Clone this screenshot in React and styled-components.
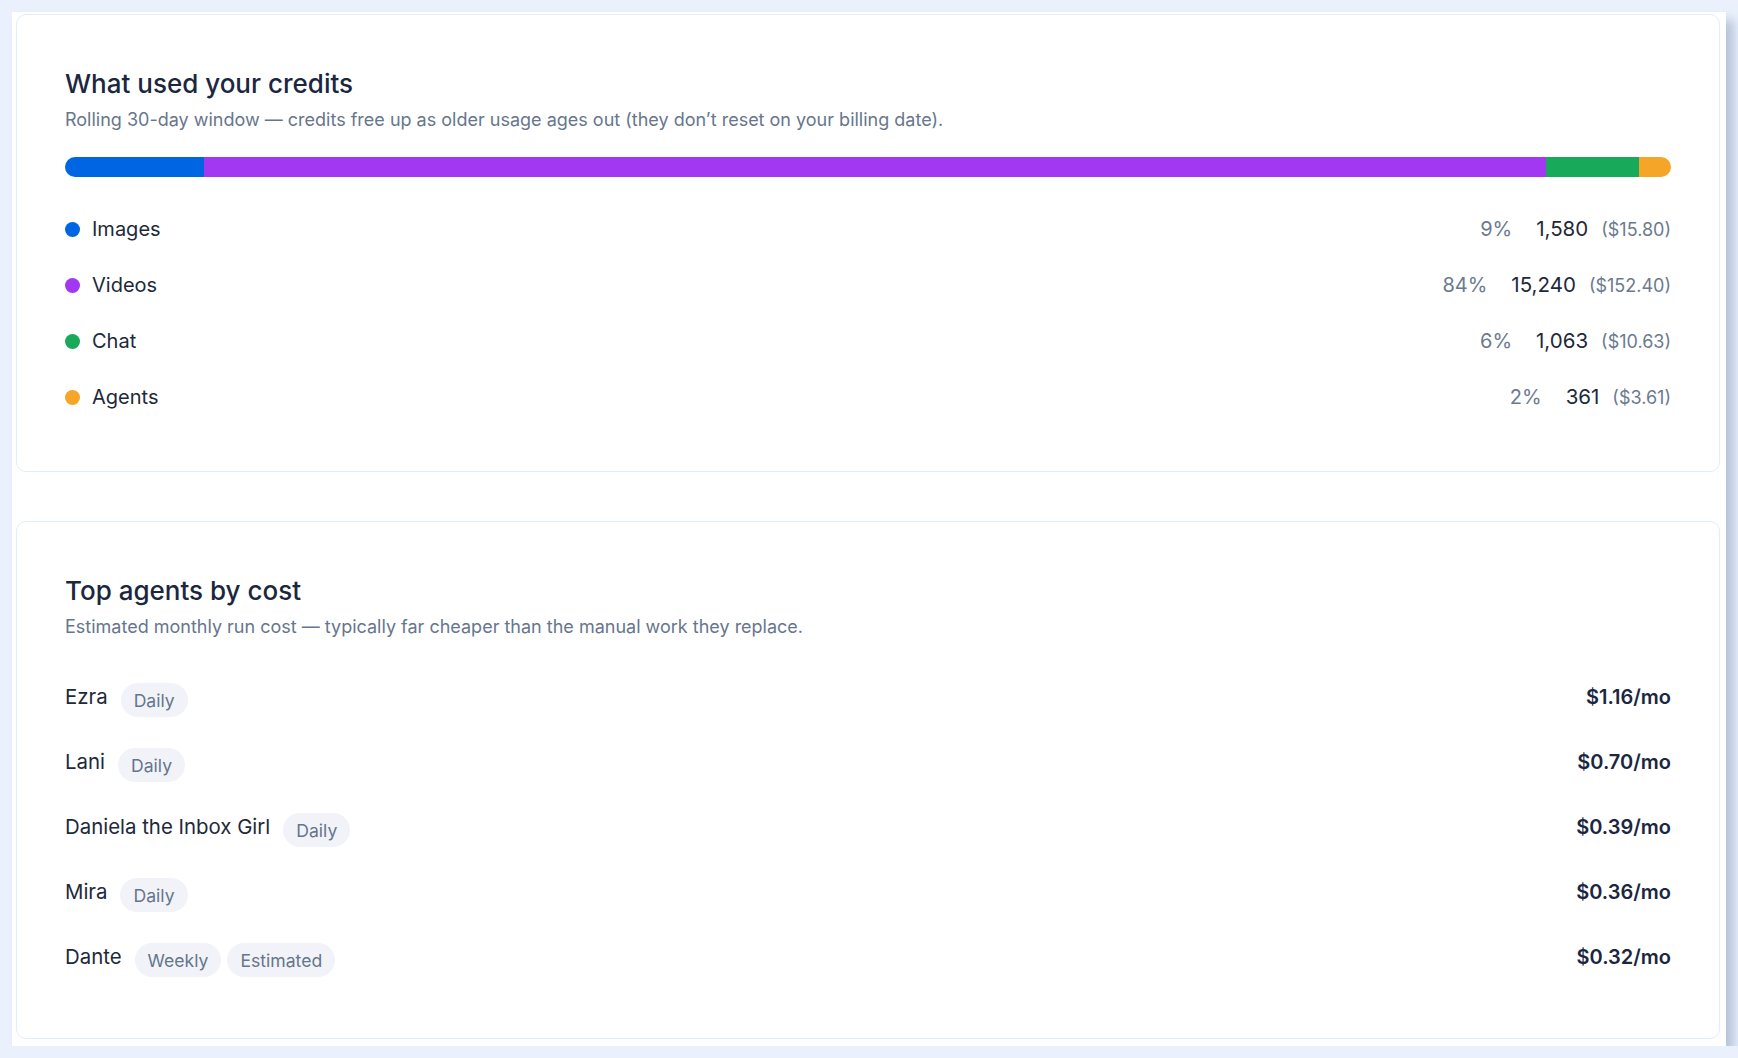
import React from 'react';
import styled, { createGlobalStyle } from 'styled-components';

const GlobalStyle = createGlobalStyle`
  html, body {
    margin: 0;
    padding: 0;
    background: #eaf1fd;
    font-family: Inter, "Noto Sans", "Liberation Sans", sans-serif;
    color: #1e293b;
    -webkit-font-smoothing: antialiased;
  }
`;

const Page = styled.div`
  padding: 12px 12px 0 12px;
`;

const Panel = styled.div`
  background: #ffffff;
  padding: 2px 6px 7px 4px;
  display: flex;
  flex-direction: column;
  gap: 49px;
  box-shadow: 8px 8px 10px rgba(74, 98, 140, 0.32);
`;

const Card = styled.section`
  border: 1px solid #e3ecfa;
  border-radius: 10px;
  padding: 52px 48px ${(p) => p.$bottom}px;
`;

const Title = styled.h2`
  margin: 0;
  font-size: 26px;
  line-height: 34px;
  font-weight: 500;
  color: #1b2740;
`;

const Subtitle = styled.p`
  margin: 7px 0 0;
  font-size: 18px;
  line-height: 24px;
  color: #67768c;
`;

const Bar = styled.div`
  display: flex;
  height: 20px;
  margin-top: 25px;
  border-radius: 999px;
  overflow: hidden;
`;

const Segment = styled.div`
  height: 100%;
  background: ${(p) => p.$color};
`;

const Legend = styled.ul`
  list-style: none;
  margin: 24px 0 0;
  padding: 0;
`;

const LegendRow = styled.li`
  display: flex;
  align-items: center;
  height: 56px;
`;

const Dot = styled.span`
  width: 15px;
  height: 15px;
  border-radius: 50%;
  background: ${(p) => p.$color};
  margin-right: 12px;
  flex-shrink: 0;
`;

const Label = styled.span`
  font-size: 20px;
  line-height: 28px;
  color: #1e293b;
  flex: 1;
`;

const Stats = styled.div`
  display: flex;
  align-items: baseline;
`;

const Pct = styled.span`
  font-size: 20px;
  line-height: 28px;
  color: #6b7a90;
  margin-right: 24px;
`;

const Credits = styled.span`
  font-size: 20.5px;
  line-height: 28px;
  color: #1e293b;
  margin-right: 13px;
`;

const Cost = styled.span`
  font-size: 18px;
  line-height: 28px;
  color: #6b7a90;
`;

const AgentList = styled.ul`
  list-style: none;
  margin: 38px 0 0;
  padding: 0;
  display: flex;
  flex-direction: column;
  gap: 25px;
`;

const AgentRow = styled.li`
  display: flex;
  align-items: center;
  height: 40px;
`;

const AgentName = styled.span`
  font-size: 20.4px;
  line-height: 28px;
  color: #1e293b;
  margin-right: 13px;
`;

const Tags = styled.div`
  display: flex;
  gap: 6px;
  margin-top: 6px;
  flex: 1;
`;

const Tag = styled.span`
  display: inline-flex;
  align-items: center;
  height: 34px;
  padding: 0 13px;
  border-radius: 999px;
  background: #f1f3f9;
  color: #66758b;
  font-size: 17.6px;
`;

const Price = styled.span`
  font-size: 20px;
  line-height: 28px;
  font-weight: 600;
  color: #1b2740;
`;

const usage = [
  { label: 'Images', color: '#0065e3', pct: '9%', credits: 1580, cost: '$15.80' },
  { label: 'Videos', color: '#a338f2', pct: '84%', credits: 15240, cost: '$152.40' },
  { label: 'Chat', color: '#18a95a', pct: '6%', credits: 1063, cost: '$10.63' },
  { label: 'Agents', color: '#f5a527', pct: '2%', credits: 361, cost: '$3.61' },
];

const agents = [
  { name: 'Ezra', tags: ['Daily'], price: '$1.16/mo' },
  { name: 'Lani', tags: ['Daily'], price: '$0.70/mo' },
  { name: 'Daniela the Inbox Girl', tags: ['Daily'], price: '$0.39/mo' },
  { name: 'Mira', tags: ['Daily'], price: '$0.36/mo' },
  { name: 'Dante', tags: ['Weekly', 'Estimated'], price: '$0.32/mo' },
];

export default function App() {
  const total = usage.reduce((sum, u) => sum + u.credits, 0);

  return (
    <>
      <GlobalStyle />
      <Page>
        <Panel>
          <Card $bottom={46}>
            <Title>What used your credits</Title>
            <Subtitle>
              Rolling 30-day window — credits free up as older usage ages out (they don’t reset on your billing date).
            </Subtitle>
            <Bar>
              {usage.map((u) => (
                <Segment
                  key={u.label}
                  $color={u.color}
                  style={{ width: `${(u.credits / total) * 100}%` }}
                />
              ))}
            </Bar>
            <Legend>
              {usage.map((u) => (
                <LegendRow key={u.label}>
                  <Dot $color={u.color} />
                  <Label>{u.label}</Label>
                  <Stats>
                    <Pct>{u.pct}</Pct>
                    <Credits>{u.credits.toLocaleString('en-US')}</Credits>
                    <Cost>({u.cost})</Cost>
                  </Stats>
                </LegendRow>
              ))}
            </Legend>
          </Card>

          <Card $bottom={61}>
            <Title>Top agents by cost</Title>
            <Subtitle>
              Estimated monthly run cost — typically far cheaper than the manual work they replace.
            </Subtitle>
            <AgentList>
              {agents.map((a) => (
                <AgentRow key={a.name}>
                  <AgentName>{a.name}</AgentName>
                  <Tags>
                    {a.tags.map((t) => (
                      <Tag key={t}>{t}</Tag>
                    ))}
                  </Tags>
                  <Price>{a.price}</Price>
                </AgentRow>
              ))}
            </AgentList>
          </Card>
        </Panel>
      </Page>
    </>
  );
}
